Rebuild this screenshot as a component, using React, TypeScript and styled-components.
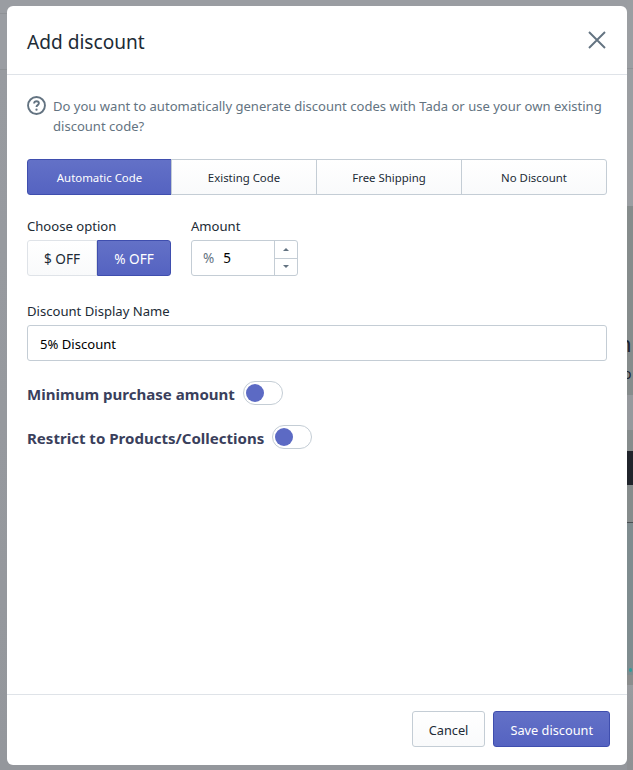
import styled, { createGlobalStyle } from 'styled-components';

const GlobalStyle = createGlobalStyle`
  html, body {
    margin: 0;
    padding: 0;
  }
  body {
    font-family: "Noto Sans", "Open Sans", sans-serif;
    background: #999c9f;
  }
`;

const Backdrop = styled.div`
  position: relative;
  width: 633px;
  height: 770px;
  box-sizing: border-box;
  padding: 6px 6px 5px 7px;
  overflow: hidden;
  background:
    linear-gradient(
      to bottom,
      #9b9ea2 0,
      #9b9ea2 68px,
      #8f9296 68px,
      #8f9296 69px,
      #9b9ea2 69px,
      #9b9ea2 206px,
      #868c8c 206px,
      #868c8c 395px,
      #96999d 395px,
      #96999d 430px,
      #868c8c 430px,
      #868c8c 451px,
      #20242b 451px,
      #20242b 485px,
      #868c8c 485px,
      #868c8c 522px,
      #4b4f52 522px,
      #4b4f52 523px,
      #7f8c8f 523px,
      #7f8c8f 675px,
      #8b8d8d 675px,
      #8b8d8d 685px,
      #999ca0 685px,
      #8f9194 765px
    ) right top / 6px 100% no-repeat,
    linear-gradient(
      to bottom,
      #9a9da2 0,
      #9a9da2 13px,
      #8f9296 13px,
      #8f9296 14px,
      #9a9da2 14px,
      #9a9da2 69px,
      #8f9296 69px,
      #8f9296 70px,
      #989ba0 70px,
      #94979c 100%
    );

  &::after {
    content: '';
    position: absolute;
    right: 1px;
    top: 668px;
    width: 3px;
    height: 4px;
    border-radius: 50%;
    background: #2e9c9c;
  }
`;

const PeekText = styled.span<{ $left: number; $top: number; $size: number }>`
  position: absolute;
  left: ${(p) => p.$left}px;
  top: ${(p) => p.$top}px;
  font-size: ${(p) => p.$size}px;
  line-height: 1;
  color: #1c2430;
`;

const Modal = styled.div`
  position: relative;
  z-index: 1;
  width: 620px;
  height: 759px;
  display: flex;
  flex-direction: column;
  background: #ffffff;
  border-radius: 6px;
  overflow: hidden;
`;

const Header = styled.div`
  height: 69px;
  flex: none;
  box-sizing: border-box;
  display: flex;
  align-items: center;
  justify-content: space-between;
  padding: 0 20px;
  border-bottom: 1px solid #dfe3e8;
`;

const Title = styled.h2`
  margin: 0;
  padding-top: 4px;
  font-size: 19.1px;
  font-weight: 400;
  color: #212b36;
`;

const CloseButton = styled.button`
  display: flex;
  padding: 0;
  border: 0;
  background: none;
  color: #637381;
`;

const Body = styled.div`
  flex: 1;
  padding: 21px 20px 0;
`;

const Hint = styled.div`
  display: flex;
  gap: 7px;
  font-size: 13.05px;
  line-height: 20px;
  color: #637381;
`;

const HintIcon = styled.span`
  flex: none;
  display: flex;
  height: 19px;
  color: #637381;
`;

const Tabs = styled.div`
  display: flex;
  margin-top: 23px;
  height: 36px;
`;

const Tab = styled.button<{ $active?: boolean }>`
  flex: 1;
  margin-left: -1px;
  font-family: inherit;
  font-size: 11.4px;
  padding: 0;
  border: 1px solid ${(p) => (p.$active ? '#3f4eae' : '#c4cdd5')};
  color: ${(p) => (p.$active ? '#ffffff' : '#212b36')};
  background: ${(p) =>
    p.$active
      ? 'linear-gradient(to bottom, #6371c7, #5563c1)'
      : 'linear-gradient(to bottom, #ffffff, #f9fafb)'};

  &:first-child {
    flex: 0 0 145px;
    margin-left: 0;
    border-radius: 3px 0 0 3px;
  }
  &:last-child {
    border-radius: 0 3px 3px 0;
  }
`;

const OptionRow = styled.div`
  display: flex;
  gap: 20px;
  margin-top: 21px;
`;

const Field = styled.div`
  display: flex;
  flex-direction: column;
`;

const Label = styled.label`
  font-size: 13.1px;
  line-height: 20px;
  margin-bottom: 4px;
  color: #212b36;
`;

const Segmented = styled.div`
  display: flex;
  height: 36px;
`;

const Segment = styled.button<{ $active?: boolean }>`
  width: ${(p) => (p.$active ? '74px' : '70px')};
  font-family: inherit;
  font-size: 13.6px;
  padding: 0;
  border: 1px solid ${(p) => (p.$active ? '#3f4eae' : '#dfe3e8')};
  border-radius: ${(p) => (p.$active ? '0 3px 3px 0' : '3px 0 0 3px')};
  color: ${(p) => (p.$active ? '#ffffff' : '#212b36')};
  background: ${(p) =>
    p.$active
      ? 'linear-gradient(to bottom, #6371c7, #5563c1)'
      : 'linear-gradient(to bottom, #ffffff, #f9fafb)'};
`;

const Stepper = styled.div`
  display: flex;
  width: 107px;
  height: 36px;
  box-sizing: border-box;
  border: 1px solid #c4cdd5;
  border-radius: 3px;
`;

const StepperValue = styled.div`
  flex: 1;
  display: flex;
  align-items: center;
  gap: 9px;
  padding-left: 11px;
  font-size: 13.5px;
  color: #000000;
`;

const Prefix = styled.span`
  color: #637381;
`;

const StepperArrows = styled.div`
  width: 22px;
  display: flex;
  flex-direction: column;
  border-left: 1px solid #c4cdd5;
`;

const Arrow = styled.div<{ $down?: boolean }>`
  flex: 1;
  display: flex;
  align-items: center;
  justify-content: center;
  border-top: ${(p) => (p.$down ? '1px solid #c4cdd5' : '0')};

  &::before {
    content: '';
    border-left: 3.5px solid transparent;
    border-right: 3.5px solid transparent;
    ${(p) => (p.$down ? 'border-top' : 'border-bottom')}: 3px solid #637381;
  }
`;

const NameField = styled(Field)`
  margin-top: 25px;
`;

const TextInput = styled.div`
  height: 36px;
  box-sizing: border-box;
  display: flex;
  align-items: center;
  padding: 2px 12px 0;
  border: 1px solid #c4cdd5;
  border-radius: 3px;
  font-size: 13.1px;
  color: #000000;
`;

const ToggleRow = styled.div`
  display: flex;
  align-items: center;
  gap: 8px;
  height: 24px;
  margin-top: 20px;
  font-size: 15.05px;
  font-weight: 700;
  color: #3a3f5c;

  & + & {
    margin-top: 20px;
  }
`;

const ToggleLabel = styled.span`
  padding-top: 2px;
`;

const Toggle = styled.span`
  width: 40px;
  height: 24px;
  box-sizing: border-box;
  padding: 2px 0 0 2px;
  border: 1px solid #c4cdd5;
  border-radius: 12px;
  background: #ffffff;

  &::before {
    content: '';
    display: block;
    width: 18px;
    height: 18px;
    border-radius: 50%;
    background: #5c6ac4;
  }
`;

const Footer = styled.div`
  height: 71px;
  flex: none;
  box-sizing: border-box;
  display: flex;
  align-items: flex-start;
  justify-content: flex-end;
  gap: 8px;
  padding: 16px 17px 0 0;
  border-top: 1px solid #dfe3e8;
`;

const Button = styled.button<{ $primary?: boolean }>`
  height: 36px;
  padding: 2px 16px 0;
  font-family: inherit;
  font-size: 12.75px;
  border-radius: 3px;
  border: 1px solid ${(p) => (p.$primary ? '#3f4eae' : '#c4cdd5')};
  color: ${(p) => (p.$primary ? '#ffffff' : '#212b36')};
  background: ${(p) =>
    p.$primary
      ? 'linear-gradient(to bottom, #6371c7, #5563c1)'
      : 'linear-gradient(to bottom, #ffffff, #f9fafb)'};
`;

const App: React.FC = () => (
  <Backdrop>
    <GlobalStyle />
    <PeekText $left={618} $top={332} $size={22}>n</PeekText>
    <PeekText $left={623} $top={367} $size={14}>o</PeekText>
    <Modal>
      <Header>
        <Title>Add discount</Title>
        <CloseButton>
          <svg width="20" height="20" viewBox="0 0 20 20" fill="none" stroke="currentColor" strokeWidth="1.9">
            <path d="M2 2l16 16M18 2L2 18" />
          </svg>
        </CloseButton>
      </Header>
      <Body>
        <Hint>
          <HintIcon>
            <svg width="19" height="19" viewBox="0 0 20 20" fill="none">
              <circle cx="10" cy="10" r="8.9" stroke="currentColor" strokeWidth="2" />
              <path d="M7.5 7.8c0-1.4 1.1-2.3 2.5-2.3s2.5.9 2.5 2.2c0 1.9-2.5 1.9-2.5 3.8" stroke="currentColor" strokeWidth="2" />
              <circle cx="10" cy="14.4" r="1.2" fill="currentColor" />
            </svg>
          </HintIcon>
          <span>
            Do you want to automatically generate discount codes with Tada or use your own existing discount code?
          </span>
        </Hint>
        <Tabs>
          <Tab $active>Automatic Code</Tab>
          <Tab>Existing Code</Tab>
          <Tab>Free Shipping</Tab>
          <Tab>No Discount</Tab>
        </Tabs>
        <OptionRow>
          <Field>
            <Label>Choose option</Label>
            <Segmented>
              <Segment>$ OFF</Segment>
              <Segment $active>% OFF</Segment>
            </Segmented>
          </Field>
          <Field>
            <Label>Amount</Label>
            <Stepper>
              <StepperValue>
                <Prefix>%</Prefix>
                <span>5</span>
              </StepperValue>
              <StepperArrows>
                <Arrow />
                <Arrow $down />
              </StepperArrows>
            </Stepper>
          </Field>
        </OptionRow>
        <NameField>
          <Label>Discount Display Name</Label>
          <TextInput>5% Discount</TextInput>
        </NameField>
        <ToggleRow>
          <ToggleLabel>Minimum purchase amount</ToggleLabel>
          <Toggle />
        </ToggleRow>
        <ToggleRow>
          <ToggleLabel>Restrict to Products/Collections</ToggleLabel>
          <Toggle />
        </ToggleRow>
      </Body>
      <Footer>
        <Button>Cancel</Button>
        <Button $primary>Save discount</Button>
      </Footer>
    </Modal>
  </Backdrop>
);

export default App;
